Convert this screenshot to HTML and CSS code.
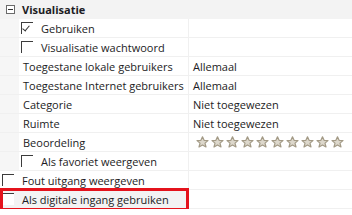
FILE: index.html
```html
<!DOCTYPE html>
<html lang="nl">
<head>
  <meta charset="UTF-8">
  <title>Eigenschappen</title>
  <link rel="stylesheet" href="styles.css">
</head>
<body>
  <div class="grid">
    <div class="category">
      <span class="toggle"></span>
      <span class="category-name">Visualisatie</span>
    </div>

    <div class="row nested">
      <div class="name"><span class="check checked"></span>Gebruiken</div>
      <div class="value"></div>
    </div>
    <div class="row nested">
      <div class="name"><span class="check"></span>Visualisatie wachtwoord</div>
      <div class="value"></div>
    </div>
    <div class="row nested">
      <div class="name plain">Toegestane lokale gebruikers</div>
      <div class="value">Allemaal</div>
    </div>
    <div class="row nested">
      <div class="name plain">Toegestane Internet gebruikers</div>
      <div class="value">Allemaal</div>
    </div>
    <div class="row nested">
      <div class="name plain">Categorie</div>
      <div class="value">Niet toegewezen</div>
    </div>
    <div class="row nested">
      <div class="name plain">Ruimte</div>
      <div class="value">Niet toegewezen</div>
    </div>
    <div class="row nested">
      <div class="name plain">Beoordeling</div>
      <div class="value stars" id="stars"></div>
    </div>
    <div class="row nested">
      <div class="name"><span class="check"></span>Als favoriet weergeven</div>
      <div class="value"></div>
    </div>

    <div class="row">
      <div class="name"><span class="check"></span>Fout uitgang weergeven</div>
      <div class="value"></div>
    </div>
    <div class="row selected">
      <div class="name"><span class="check"></span>Als digitale ingang gebruiken</div>
      <div class="value"></div>
    </div>
  </div>

  <script>
    // rating: 10 empty stars
    const stars = document.getElementById('stars');
    for (let i = 0; i < 10; i++) {
      stars.insertAdjacentHTML('beforeend',
        '<svg class="star" width="13" height="12" viewBox="0 0 13 12">' +
        '<path d="M6.5 0.8 L8.1 4.3 L12 4.6 L9 7.1 L10 11 L6.5 8.9 L3 11 L4 7.1 L1 4.6 L4.9 4.3 Z" ' +
        'fill="#ddd8cc" stroke="#a39a86" stroke-width="1.2" stroke-linejoin="round"/></svg>');
    }
  </script>
</body>
</html>
```

FILE: styles.css
```css
/* Property grid */
body {
  margin: 0;
  font-family: "Open Sans", "Noto Sans", Arial, sans-serif;
  font-size: 11px;
  color: #1c1c24;
  background-color: white;
}

.grid {
  width: 352px;
}

.category {
  height: 19px;
  display: flex;
  align-items: center;
  background-color: #f3f3f3;
}

.toggle {
  position: relative;
  width: 7px;
  height: 7px;
  border: 1px solid #6a6a6a;
  margin-left: 6px;
  margin-right: 7px;
  background: white;
}

.toggle::after {
  content: "";
  position: absolute;
  left: 1px;
  right: 1px;
  top: 3px;
  height: 1px;
  background: #333;
}

.category-name {
  font-weight: bold;
}

.row {
  display: grid;
  grid-template-columns: 189px 1fr;
  height: 18px;
  border-bottom: 1px solid #f0f0f0;
}

.name {
  display: flex;
  align-items: center;
  border-right: 1px solid #f0f0f0;
  white-space: nowrap;
  overflow: hidden;
}

.row.nested .name {
  padding-left: 19px;
  background: linear-gradient(to right, #f6f6f6 19px, white 19px);
}

.name.plain {
  padding-left: 4px;
}

.row.nested .name.plain {
  padding-left: 23px;
}

.value {
  display: flex;
  align-items: center;
  padding-left: 4px;
  white-space: nowrap;
}

.check {
  position: relative;
  flex: none;
  width: 11px;
  height: 11px;
  margin-left: 2px;
  margin-right: 8px;
  border-top: 1px solid #3c3c3c;
  border-left: 1px solid #3c3c3c;
  background: white;
}

.check.checked::after {
  content: "";
  position: absolute;
  left: 2px;
  top: 1px;
  width: 3px;
  height: 6px;
  border-right: 1px solid #333;
  border-bottom: 1px solid #333;
  transform: rotate(40deg);
}

.stars {
  padding-left: 7px;
  gap: 2px;
}

.star {
  display: block;
}

/* highlighted row */
.row.selected {
  position: relative;
}

.row.selected .name {
  background: #f3f3f3;
}

.row.selected::after {
  content: "";
  position: absolute;
  left: 0;
  top: -2px;
  width: 183px;
  height: 17px;
  border: 3px solid #e4131c;
}
```
